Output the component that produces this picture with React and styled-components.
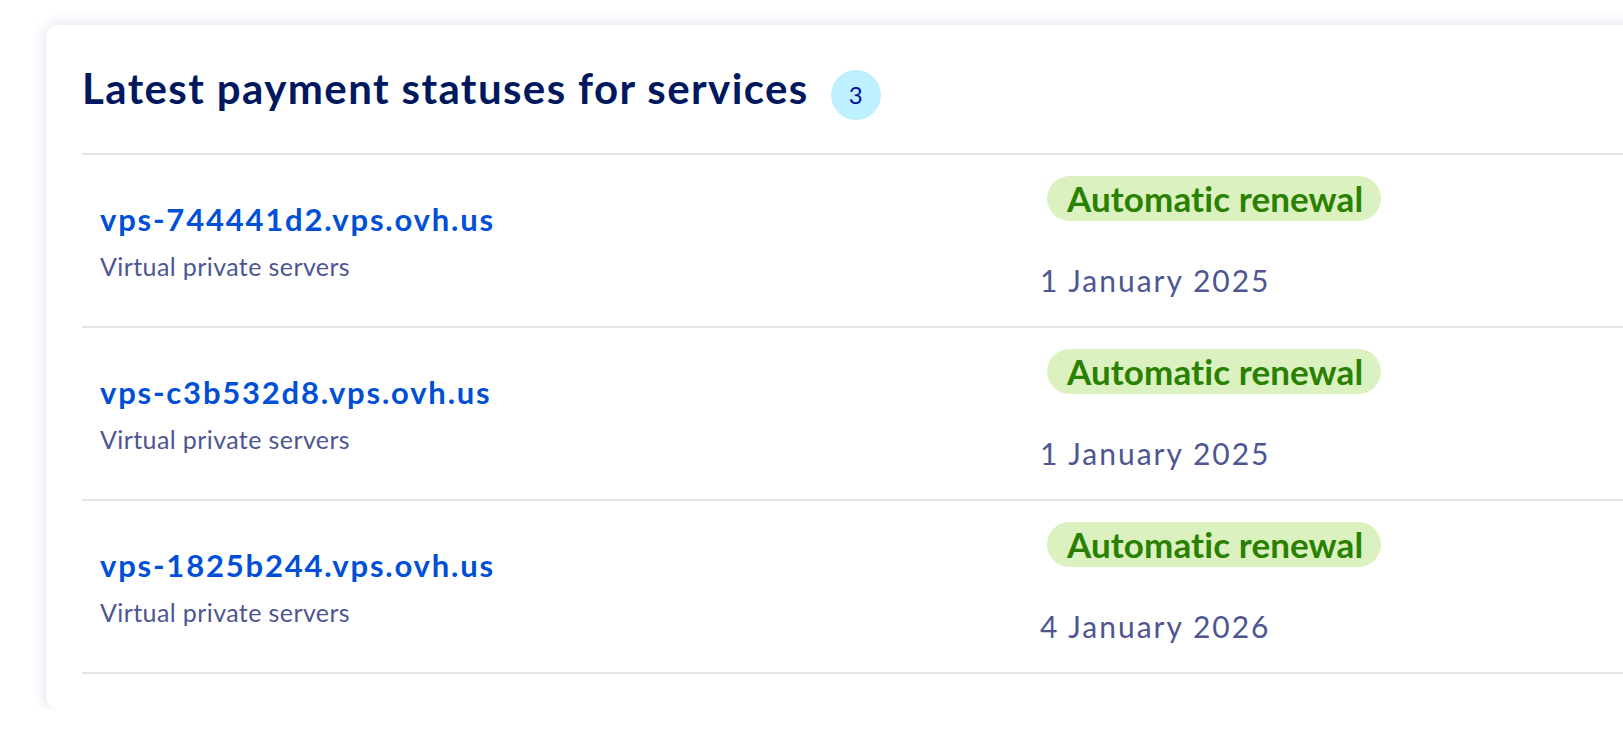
import React from "react";
import styled, { createGlobalStyle } from "styled-components";

const GlobalStyle = createGlobalStyle`
  html, body {
    margin: 0;
    padding: 0;
    background: #ffffff;
    overflow: hidden;
  }
  body {
    font-family: Lato, "Open Sans", sans-serif;
  }
`;

const Page = styled.div`
  padding: 25px 0 0 46px;
`;

const Card = styled.section`
  width: 1640px;
  box-sizing: border-box;
  background: #ffffff;
  border-radius: 12px;
  box-shadow: 0 0 16px rgba(0, 14, 156, 0.14);
  padding: 38px 0 35px 36px;
`;

const Header = styled.div`
  display: flex;
  align-items: flex-start;
  gap: 22px;
  padding-bottom: 33px;
  border-bottom: 2px solid #e5e5e8;
`;

const Title = styled.h2`
  margin: 0;
  font-family: Lato, sans-serif;
  font-weight: 700;
  font-size: 42px;
  line-height: 50px;
  color: #00185e;
  letter-spacing: 1.4px;
`;

const CountBadge = styled.span`
  margin-top: 7px;
  width: 50px;
  height: 50px;
  border-radius: 50%;
  background: #bef1ff;
  color: #000e9c;
  display: flex;
  align-items: center;
  justify-content: center;
  font-family: Lato, sans-serif;
  font-size: 24px;
  line-height: 1;
`;

const Row = styled.div`
  display: grid;
  grid-template-columns: 958px 1fr;
  height: 171px;
  border-bottom: 2px solid #e5e5e8;
`;

const ServiceCell = styled.div`
  display: flex;
  flex-direction: column;
  justify-content: center;
  gap: 14px;
  padding-left: 18px;
`;

const ServiceLink = styled.a`
  font-family: Lato, sans-serif;
  font-weight: 700;
  font-size: 31px;
  line-height: 36px;
  color: #0050d7;
  text-decoration: none;
  letter-spacing: 1.8px;
`;

const ServiceType = styled.span`
  font-family: Lato, sans-serif;
  font-size: 25px;
  line-height: 30px;
  color: #4d5693;
  letter-spacing: 0.4px;
`;

const StatusCell = styled.div`
  display: flex;
  flex-direction: column;
  align-items: flex-start;
  padding-top: 21px;
  gap: 41px;
`;

const Pill = styled.span`
  margin-left: 7px;
  height: 45px;
  display: inline-flex;
  align-items: center;
  padding: 0 18px 0 20px;
  border-radius: 23px;
  background: ${(p) => (p.$tone === "success" ? "#dbf2c0" : "#eeeeee")};
  color: ${(p) => (p.$tone === "success" ? "#2a8000" : "#333")};
  font-family: Lato, sans-serif;
  font-weight: 700;
  font-size: 35px;
  line-height: 45px;
  letter-spacing: 0.1px;
`;

const DateText = styled.span`
  font-family: Lato, sans-serif;
  font-size: 30px;
  line-height: 36px;
  color: #4d5693;
  letter-spacing: 2px;
`;

const services = [
  { name: "vps-744441d2.vps.ovh.us", type: "Virtual private servers", date: "1 January 2025" },
  { name: "vps-c3b532d8.vps.ovh.us", type: "Virtual private servers", date: "1 January 2025" },
  { name: "vps-1825b244.vps.ovh.us", type: "Virtual private servers", date: "4 January 2026" },
];

export default function App() {
  return (
    <>
      <GlobalStyle />
      <Page>
        <Card>
          <Header>
            <Title>Latest payment statuses for services</Title>
            <CountBadge>{services.length}</CountBadge>
          </Header>
          {services.map((s) => (
            <Row key={s.name}>
              <ServiceCell>
                <ServiceLink href="#">{s.name}</ServiceLink>
                <ServiceType>{s.type}</ServiceType>
              </ServiceCell>
              <StatusCell>
                <Pill $tone="success">Automatic renewal</Pill>
                <DateText>{s.date}</DateText>
              </StatusCell>
            </Row>
          ))}
        </Card>
      </Page>
    </>
  );
}
